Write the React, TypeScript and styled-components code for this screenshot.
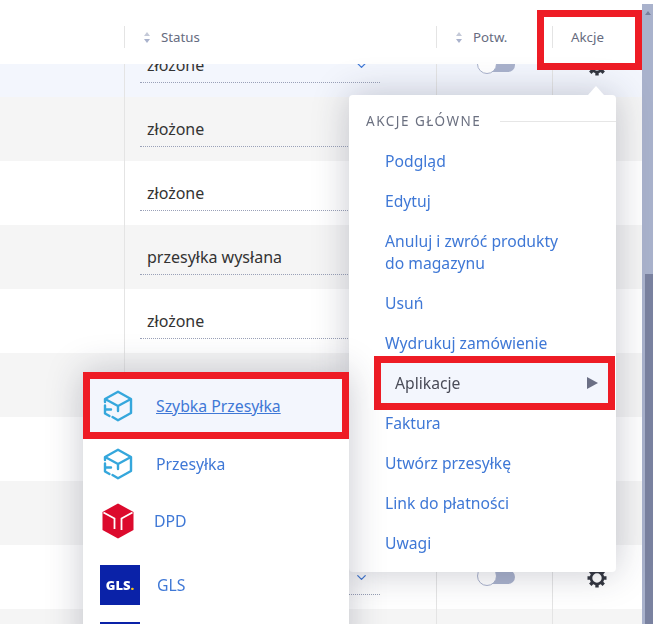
import React from 'react';
import styled, { createGlobalStyle } from 'styled-components';
import { ChevronDown } from 'lucide-react';

const GlobalStyle = createGlobalStyle`
  html, body {
    margin: 0;
    padding: 0;
    background: #fff;
    font-family: 'Noto Sans', 'Open Sans', sans-serif;
  }
`;

const Frame = styled.div`
  position: relative;
  display: flex;
  width: 666px;
  height: 624px;
  overflow: hidden;
  filter: blur(0.4px);
`;

const Table = styled.div`
  position: relative;
  width: 642px;
  flex: none;
`;

const columns = '124px 312px 116px 90px';

const Header = styled.div`
  position: relative;
  z-index: 2;
  display: grid;
  grid-template-columns: ${columns};
  height: 64px;
  background: #fff;
  align-items: center;
  padding-top: 10px;
  box-sizing: border-box;
`;

const HeadCell = styled.div<{ $pad: number }>`
  display: flex;
  align-items: center;
  height: 22px;
  padding-left: ${(p) => p.$pad}px;
  border-left: ${(p) => (p.$pad ? '1px solid #e4e4e4' : 'none')};
  font-size: 13.3px;
  color: #666c80;
`;

const SortArrows = styled.span`
  display: flex;
  flex-direction: column;
  gap: 3px;
  margin-right: 11px;

  &::before,
  &::after {
    content: '';
    width: 0;
    height: 0;
    border-left: 3px solid transparent;
    border-right: 3px solid transparent;
  }
  &::before {
    border-bottom: 4px solid #c4c9d8;
  }
  &::after {
    border-top: 4px solid #a9b2cc;
  }
`;

const AkcjeMark = styled.div`
  position: absolute;
  left: 544px;
  top: 17px;
  width: 91px;
  height: 46px;
  outline: 7px solid #ee1c25;
`;

const Row = styled.div<{ $tone: string; $height: number }>`
  display: grid;
  grid-template-columns: ${columns};
  align-content: end;
  height: ${(p) => p.$height}px;
  overflow: hidden;
  background: ${(p) => p.$tone};
`;

const Cell = styled.div`
  display: flex;
  align-items: center;
  justify-content: center;
  height: 64px;
  box-sizing: border-box;
  border-left: 1px solid #e4e4e4;

  &:first-child {
    border-left: none;
  }
`;

const StatusCell = styled(Cell)`
  justify-content: flex-start;
  align-items: flex-start;
  padding-left: 15px;
`;

const StatusField = styled.div`
  display: flex;
  align-items: center;
  justify-content: space-between;
  width: 240px;
  height: 50px;
  padding: 15px 11px 0 7px;
  box-sizing: border-box;
  border-bottom: 1px dotted #9aa1b8;
  font-size: 16px;
  color: #333;
  svg {
    color: #3f78d6;
  }
`;

const Toggle = styled.span`
  position: relative;
  display: block;
  width: 38px;
  height: 14px;
  margin-left: 2px;
  border-radius: 7px;
  background: linear-gradient(90deg, transparent 30%, #a9b2cc 30%);

  &::before {
    content: '';
    position: absolute;
    left: 0;
    top: -4px;
    width: 20px;
    height: 20px;
    box-sizing: border-box;
    border: 1px solid #a9b2cc;
    border-radius: 50%;
    background: #fff;
  }
`;

const GearIcon = styled.svg`
  margin: 1px 2px 0 0;
`;

const Scrollbar = styled.div`
  display: flex;
  flex-direction: column;
  flex: none;
  width: 11px;
  height: 620px;
  margin-top: 4px;
  background: #a9b2cc;
`;

const ScrollArrow = styled.span`
  width: 0;
  height: 0;
  margin: 7px 0 0 3px;
  border-left: 3px solid transparent;
  border-right: 3px solid transparent;
  border-bottom: 4px solid #777f9c;
`;

const ScrollThumb = styled.div`
  width: 8px;
  height: 350px;
  margin: 259px 0 0 3px;
  background: #7a82a0;
`;

const Menu = styled.div<{ $left: number; $top: number; $width: number }>`
  position: absolute;
  z-index: 3;
  left: ${(p) => p.$left}px;
  top: ${(p) => p.$top}px;
  width: ${(p) => p.$width}px;
  box-sizing: border-box;
  background: #fff;
  border-radius: 4px;
  box-shadow: 0 0 36px rgba(40, 44, 70, 0.26);
`;

const MainMenu = styled(Menu)`
  padding: 16px 0 9px;

  &::before {
    content: '';
    position: absolute;
    right: 12px;
    top: -9px;
    border-left: 8px solid transparent;
    border-right: 8px solid transparent;
    border-bottom: 9px solid #fff;
  }
`;

const MenuTitle = styled.div`
  display: flex;
  align-items: center;
  gap: 19px;
  height: 20px;
  margin-bottom: 10px;
  padding-left: 17px;
  font-size: 13.5px;
  letter-spacing: 1.5px;
  color: #6b7080;

  &::after {
    content: '';
    flex: 1;
    height: 1px;
    background: #e6e6e6;
  }
`;

const MenuItem = styled.div<{ $open?: boolean }>`
  display: flex;
  justify-content: space-between;
  align-items: center;
  padding: 9px 18px 9px ${(p) => (p.$open ? '14px' : '36px')};
  margin: ${(p) => (p.$open ? '0 8px 0 32px' : '0')};
  font-size: 15.7px;
  line-height: 22px;
  color: ${(p) => (p.$open ? '#4a4c58' : '#3f78d6')};
  background: ${(p) => (p.$open ? '#f3f6fd' : 'transparent')};
  outline: ${(p) => (p.$open ? '7px solid #ee1c25' : 'none')};
`;

const MenuLabel = styled.span`
  white-space: pre-line;
`;

const MenuArrow = styled.span`
  margin-right: -8px;
  border-top: 6px solid transparent;
  border-bottom: 6px solid transparent;
  border-left: 11px solid #6b6f85;
`;

const SubItem = styled.div<{ $active?: boolean; $height: number; $gap: number }>`
  display: flex;
  align-items: center;
  height: ${(p) => p.$height}px;
  margin: ${(p) => (p.$active ? '7px' : '0 7px')};
  padding-left: 13px;
  gap: ${(p) => p.$gap}px;
  font-size: 15.8px;
  color: #3f78d6;
  background: ${(p) => (p.$active ? '#f3f6fd' : 'transparent')};
  outline: ${(p) => (p.$active ? '7px solid #ee1c25' : 'none')};
  text-decoration: ${(p) => (p.$active ? 'underline' : 'none')};
`;

const DpdSvg = styled.svg`
  margin-left: -1px;
  flex: none;
`;

const GlsBox = styled.div`
  display: flex;
  align-items: center;
  justify-content: center;
  width: 40px;
  height: 40px;
  margin-left: -3px;
  flex: none;
  background: #0a22a8;
  color: #fff;
  font-size: 13px;
  font-weight: 900;
  b {
    color: #f5c518;
  }
`;

const GlsStub = styled.div`
  width: 40px;
  height: 40px;
  margin: 6px 0 0 17px;
  background: #0a22a8;
`;

const Gear = () => (
  <GearIcon width="22" height="22" viewBox="0 0 22 22" fill="none" stroke="#33363f">
    <circle cx="11" cy="11" r="6" strokeWidth="2.6" />
    {[0, 45, 90, 135].map((a) => (
      <path key={a} d="M11 1.5V20.5" strokeWidth="3.4" strokeDasharray="4 11" transform={`rotate(${a} 11 11)`} />
    ))}
  </GearIcon>
);

const ParcelIcon = () => (
  <svg width="30" height="32" viewBox="0 0 30 32" fill="none" stroke="#35a7dc" strokeWidth="2.4" strokeLinejoin="round" strokeLinecap="round">
    <path d="M2 12V9L15 1.8L28 9V23L15 30.2L9.5 27" />
    <path d="M3 9.5L15 16L27 9.5M15 16V21" />
    <path d="M2 15.5V23.5L6.5 26M2 19.5H8" />
  </svg>
);

const DpdIcon = () => (
  <DpdSvg width="32" height="36" viewBox="0 0 32 36">
    <path d="M16 0.5L31.5 9V27L16 35.5L0.5 27V9Z" fill="#dc0a2d" />
    <path d="M1.5 9.5L12.5 15.5V26M30.5 9.5L19.5 15.5V27" fill="none" stroke="#fff" strokeWidth="1.8" />
  </DpdSvg>
);

const rows = [
  { status: 'złożone', tone: '#f3f6fd', height: 33, chevron: true },
  { status: 'złożone', tone: '#f5f5f5', height: 64 },
  { status: 'złożone', tone: '#fff', height: 64 },
  { status: 'przesyłka wysłana', tone: '#f5f5f5', height: 64 },
  { status: 'złożone', tone: '#fff', height: 64 },
  { status: 'złożone', tone: '#f5f5f5', height: 64 },
  { status: 'złożone', tone: '#fff', height: 64 },
  { status: 'złożone', tone: '#f5f5f5', height: 64 },
  { status: 'złożone', tone: '#fff', height: 64, chevron: true },
  { status: 'złożone', tone: '#f5f5f5', height: 64 },
];

const actions = [
  'Podgląd',
  'Edytuj',
  'Anuluj i zwróć produkty\ndo magazynu',
  'Usuń',
  'Wydrukuj zamówienie',
];
const moreActions = ['Faktura', 'Utwórz przesyłkę', 'Link do płatności', 'Uwagi'];

const App = () => {
  return (
    <Frame>
      <GlobalStyle />
      <Table>
        <Header>
          <HeadCell $pad={0} />
          <HeadCell $pad={19}>
            <SortArrows />
            Status
          </HeadCell>
          <HeadCell $pad={19}>
            <SortArrows />
            Potw.
          </HeadCell>
          <HeadCell $pad={18}>Akcje</HeadCell>
          <AkcjeMark />
        </Header>
        {rows.map((row, i) => (
          <Row key={i} $tone={row.tone} $height={row.height}>
            <Cell />
            <StatusCell>
              <StatusField>
                {row.status}
                {row.chevron && <ChevronDown size={15} />}
              </StatusField>
            </StatusCell>
            <Cell>
              <Toggle />
            </Cell>
            <Cell>
              <Gear />
            </Cell>
          </Row>
        ))}
        <MainMenu $left={349} $top={95} $width={267}>
          <MenuTitle>AKCJE GŁÓWNE</MenuTitle>
          {actions.map((label) => (
            <MenuItem key={label}>
              <MenuLabel>{label}</MenuLabel>
            </MenuItem>
          ))}
          <MenuItem $open>
            Aplikacje
            <MenuArrow />
          </MenuItem>
          {moreActions.map((label) => (
            <MenuItem key={label}>{label}</MenuItem>
          ))}
        </MainMenu>
        <Menu $left={83} $top={372} $width={266}>
          <SubItem $active $height={53} $gap={23}>
            <ParcelIcon />
            Szybka Przesyłka
          </SubItem>
          <SubItem $height={49} $gap={23}>
            <ParcelIcon />
            Przesyłka
          </SubItem>
          <SubItem $height={66} $gap={20}>
            <DpdIcon />
            DPD
          </SubItem>
          <SubItem $height={62} $gap={17}>
            <GlsBox>
              GLS<b>.</b>
            </GlsBox>
            GLS
          </SubItem>
          <GlsStub />
        </Menu>
      </Table>
      <Scrollbar>
        <ScrollArrow />
        <ScrollThumb />
      </Scrollbar>
    </Frame>
  );
};

export default App;
